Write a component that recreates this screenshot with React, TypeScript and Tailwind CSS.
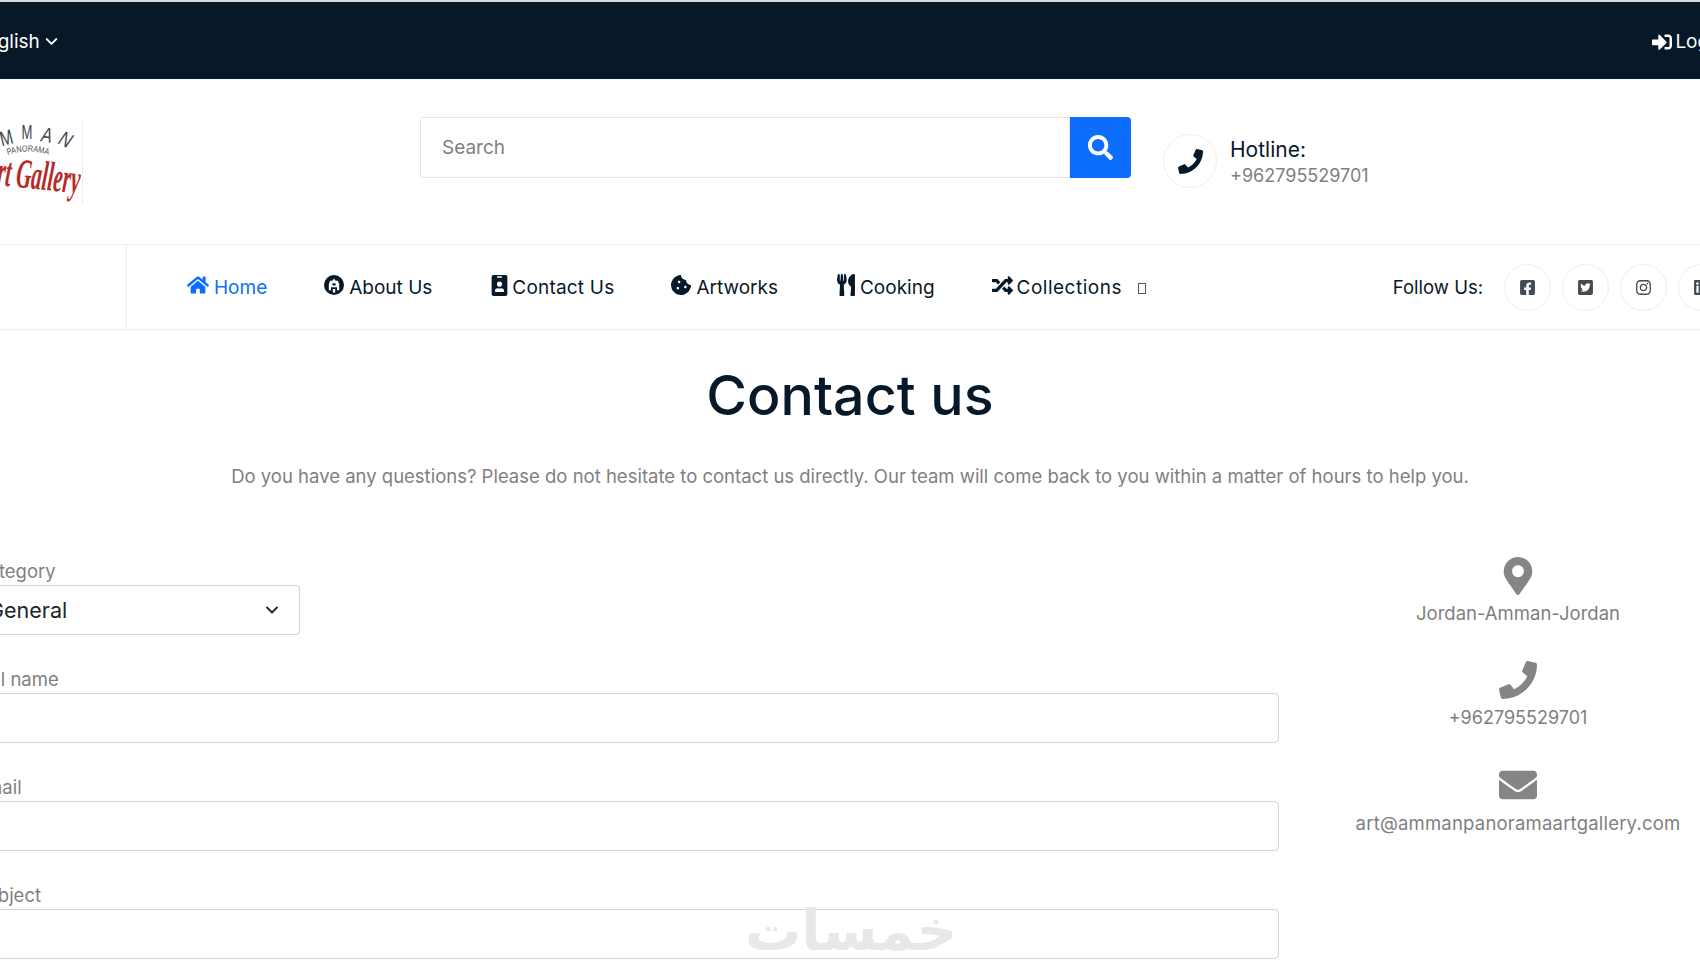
import { ChevronDown } from "lucide-react";
import {
  FaHome, FaIdBadge, FaCookieBite, FaUtensils, FaRandom, FaPhone, FaSignInAlt,
  FaSearch, FaFacebookSquare, FaTwitterSquare, FaInstagram, FaLinkedin, FaMapMarkerAlt, FaEnvelope,
} from "react-icons/fa";

const font = { fontFamily: "Inter, 'Noto Sans', sans-serif" };

function NavItem({ icon, label, active, gap = "gap-[5px]", tracking = "" }: { icon: React.ReactNode; label: string; active?: boolean; gap?: string; tracking?: string }) {
  return (
    <a className={`flex items-center ${gap} text-[19px] ${active ? "text-[#0d6efd]" : "text-[#071829]"}`}>
      <span className="-mt-[4px]">{icon}</span>
      <span className={`pt-[2px] ${tracking}`}>{label}</span>
    </a>
  );
}

function Social({ icon }: { icon: React.ReactNode }) {
  return (
    <span className="flex h-[47px] w-[47px] items-center justify-center rounded-full border border-[#eeeeee] text-[#444b52] text-[17px]">
      {icon}
    </span>
  );
}

function Field({ label, children }: { label: string; children?: React.ReactNode }) {
  return (
    <div className="flex flex-col">
      <label className="text-[18.5px] leading-[22px] text-[#7f7f7f]">{label}</label>
      {children ?? <input className="mb-[33px] mt-[3px] h-[50px] w-full rounded-[4px] border border-[#ced4da] bg-white" />}
    </div>
  );
}

function AboutIcon() {
  return (
    <svg width="20" height="20" viewBox="0 0 20 20">
      <circle cx="10" cy="10" r="10" fill="#071829" />
      <path d="M10 3.5l1.6 2.2h2.2l1.400 3.300v6.200h-2.200v-3h-6v3H4.800V9l1.400-3.300h2.200z" fill="#fff" />
      <rect x="8.400" y="8.300" width="3.200" height="2.200" fill="#071829" />
      <rect x="8.800" y="14" width="2.400" height="3.500" fill="#fff" />
    </svg>
  );
}

function Logo() {
  return (
    <svg width="108" height="84" viewBox="0 0 108 84" className="border-r border-[#eeeeee]">
      <g fill="#3d4450" fontFamily="'Liberation Sans', sans-serif" fontSize="21">
        <text x="27" y="26" textLength="13" lengthAdjust="spacingAndGlyphs" transform="rotate(-14 27 26)">M</text>
        <text x="47" y="19" textLength="11" lengthAdjust="spacingAndGlyphs">M</text>
        <text x="66" y="21" fontStyle="italic" textLength="11" lengthAdjust="spacingAndGlyphs" transform="rotate(8 66 21)">A</text>
        <text x="83" y="23" fontStyle="italic" textLength="12" lengthAdjust="spacingAndGlyphs" transform="rotate(26 83 23)">N</text>
      </g>
      <path id="logo-arc" d="M33 35 Q53 28 75 35" fill="none" />
      <text fontSize="9" fill="#4a4f57" fontFamily="'Liberation Sans', sans-serif">
        <textPath href="#logo-arc" textLength="42" lengthAdjust="spacingAndGlyphs">PANORAMA</textPath>
      </text>
      <text x="8" y="68" fontSize="42" fontWeight="700" fontStyle="italic" fill="#b82a27" fontFamily="'Liberation Serif', serif" transform="rotate(6 50 60)" textLength="98" lengthAdjust="spacingAndGlyphs">Art Gallery</text>
    </svg>
  );
}

export default function App() {
  return (
    <div className="relative h-[970px] w-[1700px] overflow-hidden bg-white" style={font}>
      <div className="h-[79px] border-t-2 border-[#d5d9dc] bg-[#071829]">
        <div className="-ml-[25px] flex h-[79px] w-[1750px] items-center justify-between text-[19px] text-white">
          <div className="flex items-center gap-[2px]">
            <span className="pt-[2px]">English</span>
            <ChevronDown size={19} strokeWidth={2.5} />
          </div>
          <div className="flex items-center gap-[3px]">
            <FaSignInAlt size={20} />
            <span className="pt-[2px]">Login</span>
          </div>
        </div>
      </div>

      <div className="-ml-[25px] flex h-[165px] w-[1750px] items-start">
        <div className="mt-[41px] w-[445px] pl-0">
          <Logo />
        </div>
        <div className="mt-[38px] flex h-[61px] w-[711px]">
          <div className="flex flex-1 items-center rounded-l-[3px] border border-[#e5e5e5] pl-[21px] pt-[2px] text-[19px] text-[#7f7f7f]">Search</div>
          <div className="flex w-[61px] items-center justify-center rounded-r-[4px] bg-[#0d6efd] text-white">
            <FaSearch size={25} />
          </div>
        </div>
        <div className="ml-[32px] mt-[55px] flex items-center gap-[13px]">
          <span className="flex h-[54px] w-[54px] items-center justify-center rounded-full border border-[#eeeeee] text-[#071829]">
            <FaPhone size={25} />
          </span>
          <div className="flex flex-col pt-[2px]">
            <span className="text-[21px] leading-[28px] text-[#071829]">Hotline:</span>
            <span className="text-[18px] leading-[24px] text-[#7f7f7f]">+962795529701</span>
          </div>
        </div>
      </div>

      <div className="h-[86px] border-y border-[#eeeeee]">
        <div className="-ml-[25px] flex h-[84px] w-[1750px] items-center">
          <div className="h-full w-[152px] border-r border-[#eeeeee]" />
          <nav className="ml-[60px] flex items-center gap-[57px]">
            <NavItem active icon={<FaHome size={22} />} label="Home" />
            <NavItem icon={<AboutIcon />} label="About Us" />
            <NavItem gap="gap-[2px]" tracking="tracking-[0.2px]" icon={<FaIdBadge size={21} />} label="Contact Us" />
            <NavItem icon={<FaCookieBite size={20} />} label="Artworks" />
            <NavItem gap="gap-[3px]" icon={<FaUtensils size={22} />} label="Cooking" />
            <div className="flex items-center gap-[16px]">
              <NavItem gap="gap-[4px]" tracking="tracking-[0.5px]" icon={<FaRandom size={21} />} label="Collections" />
              <span className="mt-[2px] h-[11px] w-[8px] border border-[#555]" />
            </div>
          </nav>
          <div className="ml-auto flex items-center gap-[11px] pr-0">
            <span className="mr-[10px] pt-[2px] text-[18.5px] text-[#071829]">Follow Us:</span>
            <Social icon={<FaFacebookSquare />} />
            <Social icon={<FaTwitterSquare />} />
            <Social icon={<FaInstagram />} />
            <Social icon={<FaLinkedin />} />
          </div>
        </div>
      </div>

      <h1 className="mt-[31px] text-center text-[55.5px] font-medium leading-[68px] text-[#071829]">Contact us</h1>
      <p className="mt-[33px] text-center text-[18.5px] leading-[28px] text-[#7f7f7f]">
        Do you have any questions? Please do not hesitate to contact us directly. Our team will come back to you within a matter of hours to help you.
      </p>

      <div className="-ml-[25px] mt-[70px] grid w-[1750px] grid-cols-[1304px_1fr]">
        <div>
          <Field label="Category">
            <div className="mb-[33px] mt-[3px] flex h-[50px] w-[325px] items-center justify-between rounded-[4px] border border-[#ced4da] pl-[12px] pr-[17px] text-[21.5px] text-[#212529]">
              <span>General</span>
              <ChevronDown size={20} strokeWidth={2.2} />
            </div>
          </Field>
          <Field label="Full name" />
          <Field label="Email" />
          <Field label="Subject" />
        </div>
        <div className="-mt-[3px] flex flex-col items-center pl-[32px] text-[18.5px] text-[#7f7f7f]">
          <FaMapMarkerAlt size={38} className="text-[#858585]" />
          <span className="mt-[5px] leading-[26px]">Jordan-Amman-Jordan</span>
          <FaPhone size={38} className="mt-[35px] text-[#858585]" />
          <span className="mt-[6px] text-[18px] leading-[26px]">+962795529701</span>
          <FaEnvelope size={38} className="mt-[35px] text-[#858585]" />
          <span className="mt-[6px] leading-[26px] tracking-[0.2px]">art@ammanpanoramaartgallery.com</span>
        </div>
      </div>

      <div dir="rtl" className="pointer-events-none absolute left-[745px] top-[899px] text-[56px] font-bold leading-[64px] text-[#e8e8e8]" style={{ fontFamily: "'DejaVu Sans', sans-serif" }}>
        خمسات
      </div>
    </div>
  );
}
